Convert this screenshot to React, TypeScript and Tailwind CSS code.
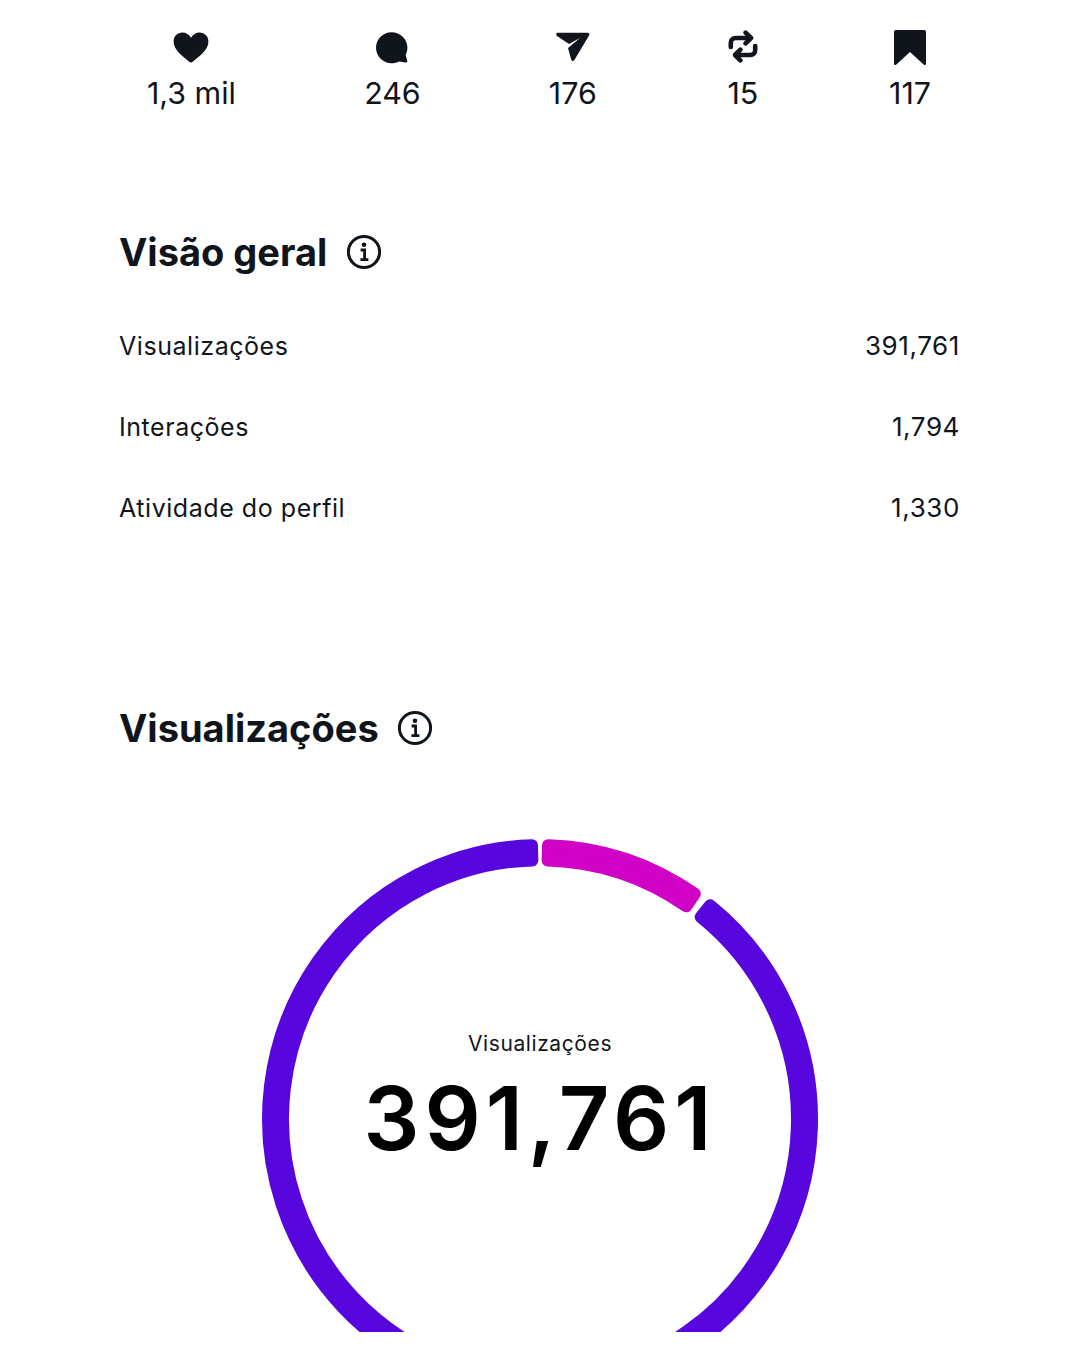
const font = { fontFamily: "Inter, 'Liberation Sans', sans-serif" };

const polar = (r: number, deg: number) => {
  const a = (deg * Math.PI) / 180;
  return `${(290 + r * Math.sin(a)).toFixed(2)} ${(290 - r * Math.cos(a)).toFixed(2)}`;
};

// annular sector, inset by the stroke so the corners come out rounded
const sector = (from: number, to: number) => {
  const outer = 272;
  const inner = 257;
  const pad = 1.3;
  const large = to - from > 180 ? 1 : 0;
  return `M${polar(outer, from + pad)} A${outer} ${outer} 0 ${large} 1 ${polar(outer, to - pad)} L${polar(inner, to - pad)} A${inner} ${inner} 0 ${large} 0 ${polar(inner, from + pad)} Z`;
};

const Heart = () => (
  <svg width="36" height="36" viewBox="0 0 36 36" fill="#10151b">
    <path d="M18 32.5 C17.4 32.5 16.8 32.2 16.2 31.7 C8.5 25.8 .6 19.6 .6 11.6 C.6 6.2 4.6 2.6 9.4 2.6 C13 2.6 16 4.6 18 7.8 C20 4.6 23 2.6 26.6 2.6 C31.4 2.6 35.4 6.2 35.4 11.6 C35.4 19.6 27.5 25.8 19.8 31.7 C19.2 32.2 18.6 32.5 18 32.5 Z" />
  </svg>
);

const Bubble = () => (
  <svg width="36" height="36" viewBox="0 0 36 36" fill="#10151b">
    <path d="M17.6 2.2 C26.4 2.2 33.4 9.2 33.4 17.6 C33.4 20.4 32.8 22.8 31.6 25 L33.2 30.6 C33.6 32 32.8 32.8 31.4 32.6 L25.2 31.4 C23 32.5 20.4 33.2 17.6 33.2 C9 33.2 2 26.2 2 17.7 C2 9.2 9 2.2 17.6 2.2 Z" />
  </svg>
);

const Send = () => (
  <svg width="36" height="36" viewBox="0 0 36 36" fill="#10151b">
    <path d="M3 2.8 H32.6 C34.2 2.8 34.8 4 34.2 5.2 L19.4 30 C18.4 31.6 16.6 31.2 16.2 29.6 L13 18 L25 8 L14 14 L2 6 C.6 5 1.2 2.8 3 2.8 Z" />
  </svg>
);

const Repost = () => (
  <svg width="36" height="36" viewBox="0 0 36 36" fill="none" stroke="#10151b" strokeWidth="4.6" strokeLinecap="round" strokeLinejoin="round">
    <path d="M5.8 17 V13 C5.8 10 7.8 8 10.8 8 H25" />
    <path d="M20.6 2.6 L26 8 L20.6 13.4" />
    <path d="M30.2 16 V20 C30.2 23 28.2 25 25.2 25 H11" />
    <path d="M15.4 19.6 L10 25 L15.4 30.4" />
  </svg>
);

const Bookmark = () => (
  <svg width="36" height="36" viewBox="0 0 36 36" fill="#10151b">
    <path d="M4 0 H32 C33.4 0 34 .8 34 2 V33.6 C34 35 32.8 35.6 31.6 34.6 L18 22 L4.4 34.6 C3.2 35.6 2 35 2 33.6 V2 C2 .8 2.6 0 4 0 Z" />
  </svg>
);

const Info = () => (
  <svg width="36" height="36" viewBox="0 0 36 36" fill="none" stroke="#10151b">
    <circle cx="18" cy="18" r="15.6" strokeWidth="3" />
    <circle cx="18" cy="10.8" r="2.3" fill="#10151b" stroke="none" />
    <path d="M14.6 16 H18.6 V25.4 M14.4 25.6 H22.4" strokeWidth="2.8" />
  </svg>
);

const stats = [
  { icon: <Heart />, value: "1,3 mil" },
  { icon: <Bubble />, value: "246" },
  { icon: <Send />, value: "176" },
  { icon: <Repost />, value: "15" },
  { icon: <Bookmark />, value: "117" },
];

const rows = [
  { label: "Visualizações", value: "391,761" },
  { label: "Interações", value: "1,794" },
  { label: "Atividade do perfil", value: "1,330" },
];

export default function App() {
  return (
    <div className="w-[1080px] h-[1350px] overflow-hidden bg-white text-[#10151b]" style={font}>
      <div className="flex justify-between pl-[147px] pr-[149px] pt-[30px]">
        {stats.map((s) => (
          <div key={s.value} className="flex flex-col items-center">
            {s.icon}
            <span className="mt-[8px] text-[30.4px] leading-[38px]">{s.value}</span>
          </div>
        ))}
      </div>

      <div className="px-[119px]">
        <div className="mt-[117px] flex items-center gap-[19px]">
          <h2 className="text-[38px] leading-[46px] font-bold">Visão geral</h2>
          <Info />
        </div>

        <div className="mt-[53px] flex flex-col gap-[45px]">
          {rows.map((r) => (
            <div key={r.label} className="flex items-center justify-between text-[26px] leading-[36px] tracking-[0.6px]">
              <span className="text-[25px] tracking-[0.55px]">{r.label}</span>
              <span className="pr-px">{r.value}</span>
            </div>
          ))}
        </div>

        <div className="mt-[179px] flex items-center gap-[18px]">
          <h2 className="text-[38px] leading-[46px] font-bold">Visualizações</h2>
          <Info />
        </div>
      </div>

      <div className="relative mx-auto mt-[76px] h-[505px] w-[580px] overflow-hidden">
        <svg width="580" height="584" viewBox="0 0 580 580" preserveAspectRatio="none">
          <path d={sector(37.4, 359.6)} fill="#5806de" stroke="#5806de" strokeWidth="12" strokeLinejoin="round" />
          <path d={sector(0.4, 36)} fill="#cf02c5" stroke="#cf02c5" strokeWidth="12" strokeLinejoin="round" />
        </svg>
        <div className="absolute inset-x-0 top-[202px] flex flex-col items-center">
          <span className="text-[21px] leading-[30px] tracking-[0.6px]">Visualizações</span>
          <span className="mt-[6px] text-[88px] leading-[106px] font-semibold tracking-[4.9px] text-black">391,761</span>
        </div>
      </div>
    </div>
  );
}
